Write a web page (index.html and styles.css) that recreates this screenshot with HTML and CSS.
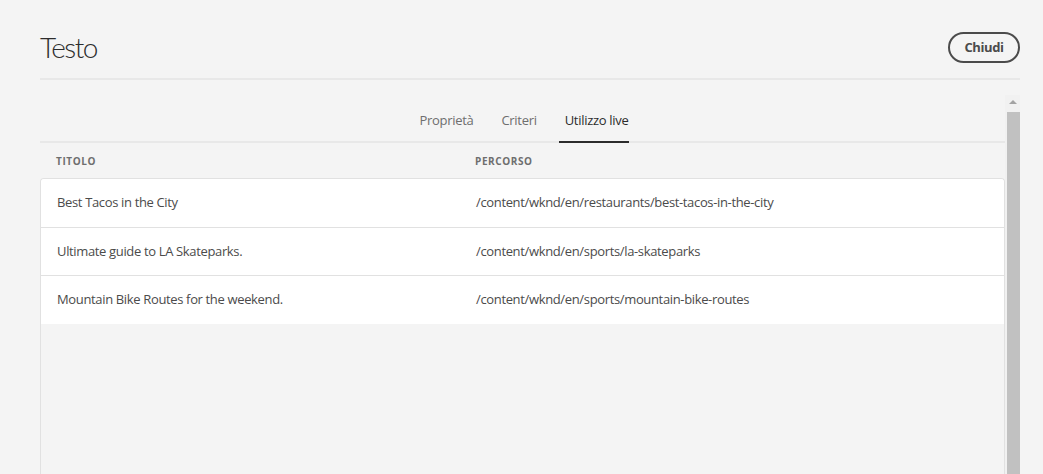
FILE: index.html
```html
<!DOCTYPE html>
<html lang="it">
<head>
<meta charset="utf-8">
<title>Testo</title>
<link rel="stylesheet" href="styles.css">
</head>
<body>
<div class="dialog">
  <header class="head">
    <h1 class="title">Testo</h1>
    <button class="close">Chiudi</button>
  </header>
  <div class="body">
    <div class="content">
      <nav class="tabs">
        <span class="tab">Proprietà</span>
        <span class="tab">Criteri</span>
        <span class="tab active">Utilizzo live</span>
      </nav>
      <div class="thead">
        <div class="th c1">Titolo</div>
        <div class="th c2">Percorso</div>
      </div>
      <div class="table">
        <div class="row"><div class="cell c1">Best Tacos in the City</div><div class="cell c2">/content/wknd/en/restaurants/best-tacos-in-the-city</div></div>
        <div class="row"><div class="cell c1">Ultimate guide to LA Skateparks.</div><div class="cell c2">/content/wknd/en/sports/la-skateparks</div></div>
        <div class="row"><div class="cell c1">Mountain Bike Routes for the weekend.</div><div class="cell c2">/content/wknd/en/sports/mountain-bike-routes</div></div>
      </div>
    </div>
    <div class="scrollbar">
      <div class="arrow"></div>
      <div class="thumb"></div>
    </div>
  </div>
</div>
</body>
</html>
```

FILE: styles.css
```css
html, body {
  margin: 0;
  padding: 0;
  height: 100%;
  background: #f4f4f4;
  overflow: hidden;
}
body {
  font-family: "Open Sans", sans-serif;
  color: #4b4b4b;
}
.dialog {
  padding: 0 23px 0 40px;
  height: 100%;
  display: flex;
  flex-direction: column;
  box-sizing: border-box;
}
.head {
  display: flex;
  align-items: flex-start;
  justify-content: space-between;
  height: 80px;
  border-bottom: 2px solid #e8e8e8;
  box-sizing: border-box;
}
.title {
  margin: 0;
  font-family: Lato, sans-serif;
  font-weight: 300;
  font-size: 28px;
  line-height: 34px;
  letter-spacing: -1.5px;
  color: #2c2c2c;
  padding-top: 30px;
}
.close {
  font-family: "Open Sans", sans-serif;
  font-weight: 700;
  font-size: 13px;
  letter-spacing: -0.4px;
  color: #4b4b4b;
  background: transparent;
  border: 2px solid #4b4b4b;
  border-radius: 16px;
  height: 31px;
  width: 72px;
  padding: 0 0 1px;
  margin-top: 32px;
}
.body {
  display: flex;
  flex: 1;
  margin-top: 15px;
  min-height: 0;
}
.content {
  flex: 1;
  display: flex;
  flex-direction: column;
}
.tabs {
  display: flex;
  justify-content: center;
  gap: 28px;
  height: 46px;
  border-bottom: 2px solid #e8e8e8;
  padding-left: 3px;
}
.tab {
  font-size: 13px;
  letter-spacing: -0.3px;
  color: #6e6e6e;
  display: flex;
  align-items: center;
  padding-top: 3px;
  border-bottom: 2px solid transparent;
  margin-bottom: -2px;
}
.tab.active {
  color: #2c2c2c;
  border-bottom-color: #2c2c2c;
  padding-left: 6px;
  margin-left: -6px;
}
.thead {
  display: flex;
  height: 35px;
  align-items: center;
}
.th {
  font-size: 10px;
  font-weight: 700;
  text-transform: uppercase;
  letter-spacing: 0.6px;
  color: #6e6e6e;
}
.c1 {
  width: 419px;
  padding-left: 16px;
  box-sizing: border-box;
  flex: none;
}
.c2 {
  padding-left: 16px;
}
.table {
  flex: 1;
  border: 1px solid #e1e1e1;
  border-bottom: none;
  border-radius: 4px 4px 0 0;
  overflow: hidden;
}
.row {
  display: flex;
  align-items: center;
  height: 48px;
  padding-bottom: 2px;
  box-sizing: border-box;
  background: #fff;
  border-bottom: 1px solid #e1e1e1;
}
.row:first-child {
  height: 49px;
}
.row:last-child {
  border-bottom: none;
  height: 48px;
}
.cell {
  font-size: 13px;
  letter-spacing: -0.35px;
  color: #4b4b4b;
}
.scrollbar {
  width: 15px;
  background: #f1f1f1;
  display: flex;
  flex-direction: column;
  align-items: flex-end;
}
.arrow {
  height: 17px;
  width: 15px;
  display: flex;
  align-items: center;
  justify-content: center;
}
.arrow::before {
  content: "";
  width: 0;
  height: 0;
  border-left: 4px solid transparent;
  border-right: 4px solid transparent;
  border-bottom: 4px solid #a3a3a3;
  margin-top: -3px;
}
.thumb {
  flex: 1;
  width: 13px;
  background: #c1c1c1;
}
```
